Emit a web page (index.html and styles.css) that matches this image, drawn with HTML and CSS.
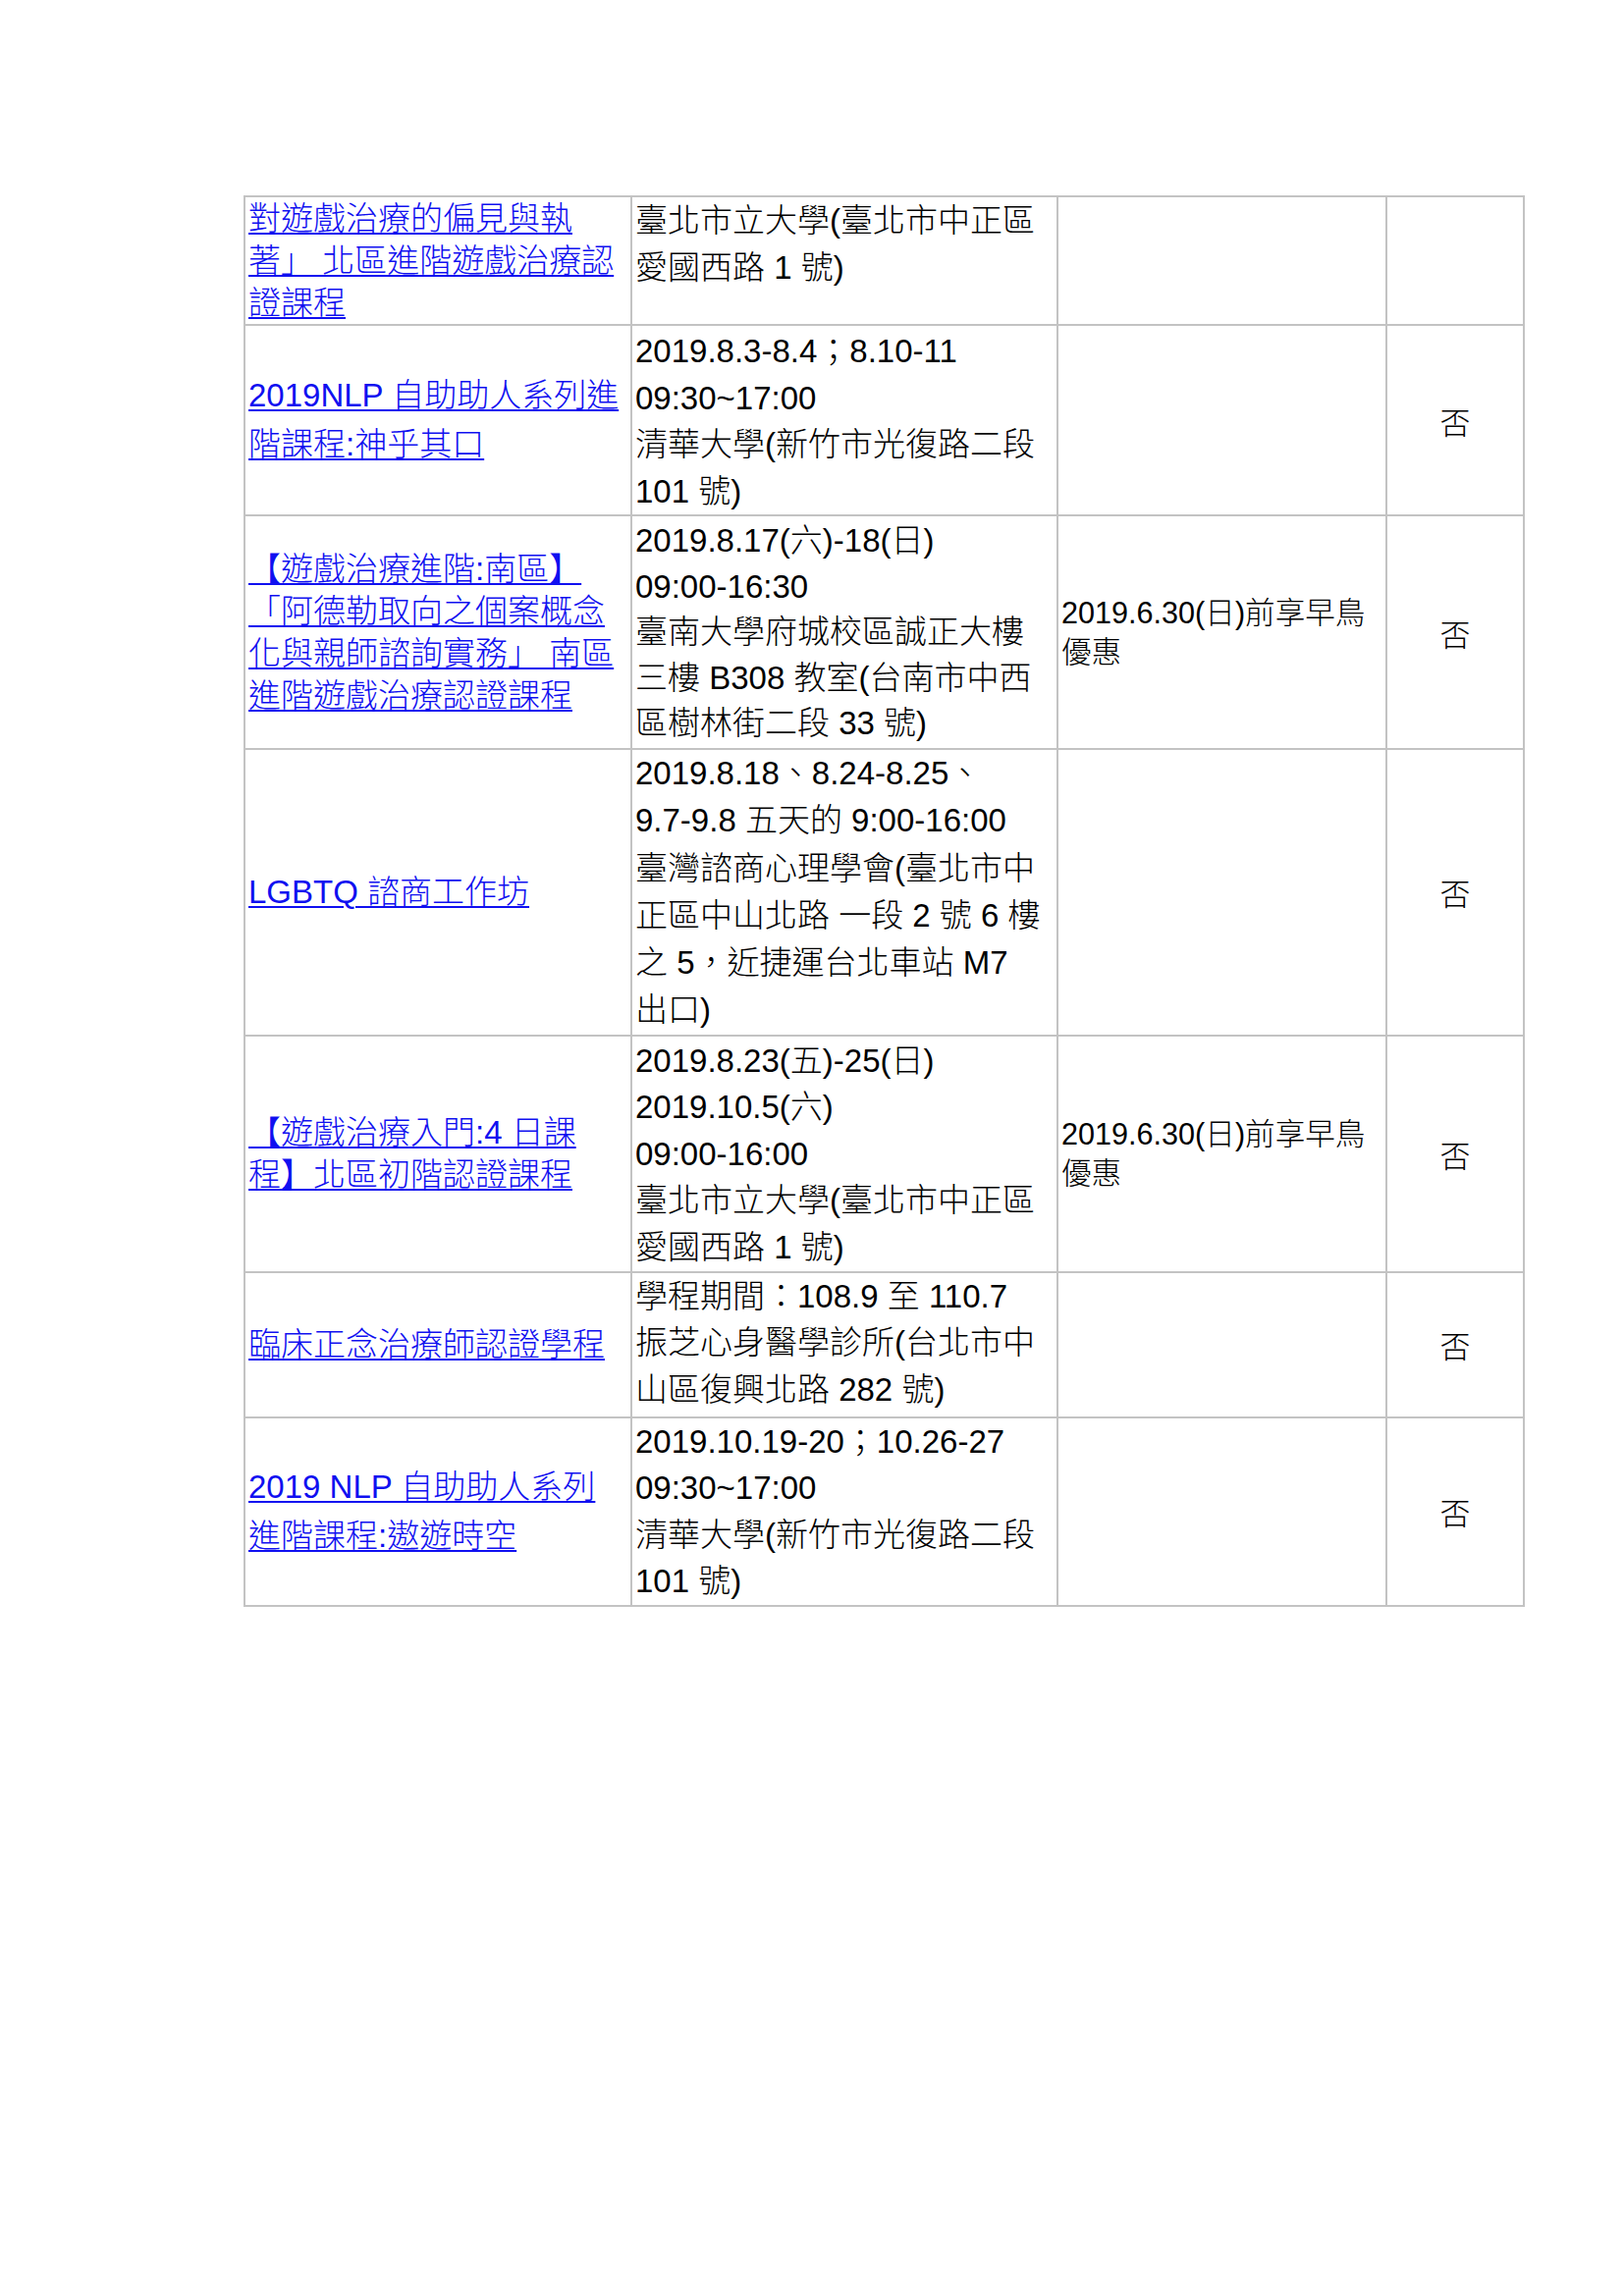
FILE: index.html
```html
<!DOCTYPE html>
<html lang="zh-Hant">
<head>
<meta charset="utf-8">
<title>課程列表</title>
<link rel="stylesheet" href="styles.css">
</head>
<body>
<div class="page">
<table class="courses">
<colgroup>
<col class="c1"><col class="c2"><col class="c3"><col class="c4">
</colgroup>
<tbody>
<tr class="r1">
<td class="name"><a href="#">對遊戲治療的偏見與執<br>著」 北區進階遊戲治療認<br>證課程</a></td>
<td class="place">臺北市立大學(臺北市中正區<br>愛國西路 1 號)</td>
<td class="note"></td>
<td class="flag"></td>
</tr>
<tr class="r2">
<td class="name latin"><a href="#">2019NLP 自助助人系列進<br>階課程:神乎其口</a></td>
<td class="place">2019.8.3-8.4；8.10-11<br>09:30~17:00<br>清華大學(新竹市光復路二段<br>101 號)</td>
<td class="note"></td>
<td class="flag">否</td>
</tr>
<tr class="r3">
<td class="name"><a href="#">【遊戲治療進階:南區】<br>「阿德勒取向之個案概念<br>化與親師諮詢實務」 南區<br>進階遊戲治療認證課程</a></td>
<td class="place">2019.8.17(六)-18(日)<br>09:00-16:30<br>臺南大學府城校區誠正大樓<br>三樓 B308 教室(台南市中西<br>區樹林街二段 33 號)</td>
<td class="note">2019.6.30(日)前享早鳥<br>優惠</td>
<td class="flag">否</td>
</tr>
<tr class="r4">
<td class="name latin"><a href="#">LGBTQ 諮商工作坊</a></td>
<td class="place">2019.8.18、8.24-8.25、<br>9.7-9.8 五天的 9:00-16:00<br>臺灣諮商心理學會(臺北市中<br>正區中山北路 一段 2 號 6 樓<br>之 5，近捷運台北車站 M7<br>出口)</td>
<td class="note"></td>
<td class="flag">否</td>
</tr>
<tr class="r5">
<td class="name"><a href="#">【遊戲治療入門:4 日課<br>程】北區初階認證課程</a></td>
<td class="place">2019.8.23(五)-25(日)<br>2019.10.5(六)<br>09:00-16:00<br>臺北市立大學(臺北市中正區<br>愛國西路 1 號)</td>
<td class="note">2019.6.30(日)前享早鳥<br>優惠</td>
<td class="flag">否</td>
</tr>
<tr class="r6">
<td class="name"><a href="#">臨床正念治療師認證學程</a></td>
<td class="place">學程期間：108.9 至 110.7<br>振芝心身醫學診所(台北市中<br>山區復興北路 282 號)</td>
<td class="note"></td>
<td class="flag">否</td>
</tr>
<tr class="r7">
<td class="name latin"><a href="#">2019 NLP 自助助人系列<br>進階課程:遨遊時空</a></td>
<td class="place">2019.10.19-20；10.26-27<br>09:30~17:00<br>清華大學(新竹市光復路二段<br>101 號)</td>
<td class="note"></td>
<td class="flag">否</td>
</tr>
</tbody>
</table>
</div>
</body>
</html>
```
FILE: styles.css
```css
html, body {
  margin: 0;
  padding: 0;
  background: #ffffff;
}

.page {
  padding: 199px 0 0 248px;
  font-family: "Liberation Sans", "Noto Sans CJK TC", sans-serif;
  font-weight: 300;
  color: #000000;
}

.courses {
  border-collapse: collapse;
  table-layout: fixed;
  width: 1303px;
}

.c1 { width: 394px; }
.c2 { width: 434px; }
.c3 { width: 335px; }
.c4 { width: 140px; }

.courses td {
  border: 2px solid #c3c3c3;
  padding: 0 3px;
  font-size: 33px;
  white-space: nowrap;
  overflow: hidden;
}

.r1 { height: 131px; }
.r2 { height: 193px; }
.r3 { height: 238px; }
.r4 { height: 291px; }
.r5 { height: 241px; }
.r6 { height: 148px; }
.r7 { height: 192px; }

.name {
  vertical-align: middle;
  line-height: 43px;
}

.name.latin {
  line-height: 50px;
}

.name a {
  color: #1010f0;
  text-decoration: underline;
  text-decoration-thickness: 2px;
  text-underline-offset: 3px;
}

.place {
  vertical-align: top;
  line-height: 47.5px;
}

.r2 .place {
  padding-top: 2px;
}

.r3 .place {
  padding-top: 2px;
  line-height: 46.5px;
}

.r4 .place {
  line-height: 48.3px;
}

.r5 .place {
  padding-top: 1px;
}

.note {
  vertical-align: middle;
  font-size: 30.6px !important;
  line-height: 40px;
}

.flag {
  vertical-align: middle;
  text-align: center;
  font-size: 31px !important;
}
```
